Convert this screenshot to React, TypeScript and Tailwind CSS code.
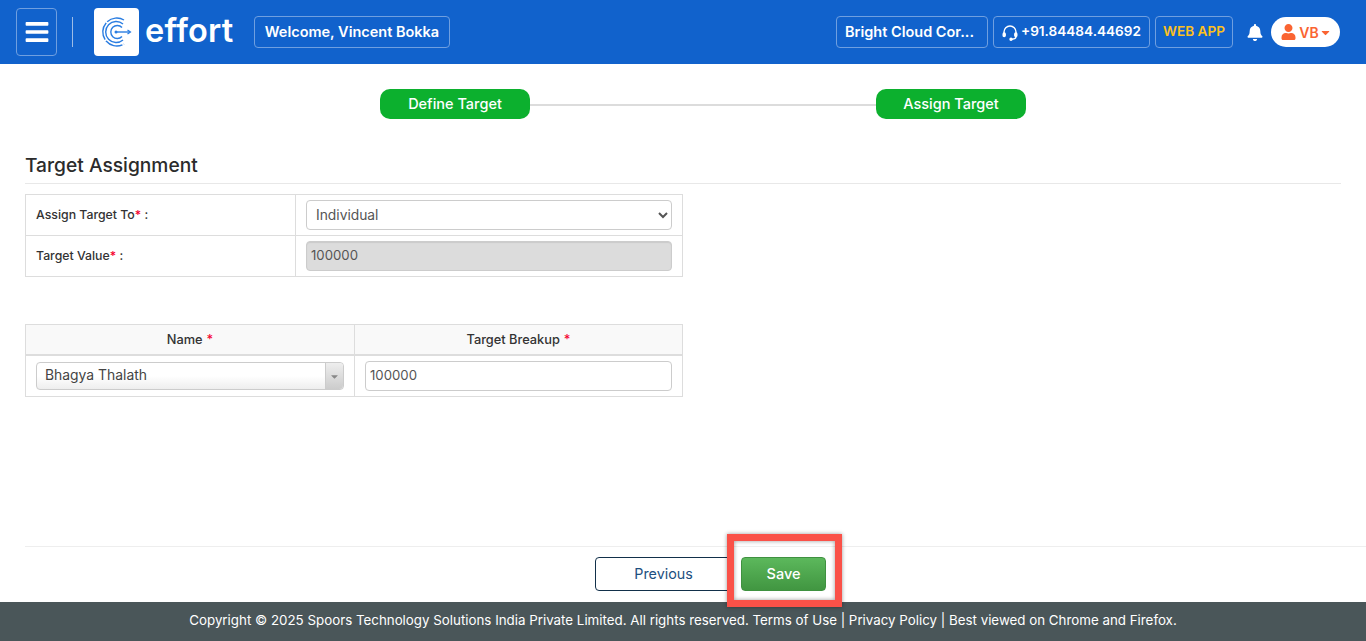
import { FaBell, FaUser, FaCaretDown, FaBars } from 'react-icons/fa';

const font = { fontFamily: 'Inter, "Noto Sans", sans-serif' };

function LogoMark() {
  return (
    <svg viewBox="0 0 44 48" className="w-[44px] h-[48px]" fill="none" stroke="#2a7de1">
      <path d="M29 12 A14 14 0 1 0 29 36" strokeWidth="1.4" strokeDasharray="18 1.5" />
      <path d="M28 16 A10.5 10.5 0 1 0 28 32" strokeWidth="1.4" />
      <path d="M27 19.5 A6.5 6.5 0 1 0 27 28.5" strokeWidth="1.4" />
      <path d="M20 24 H35" strokeWidth="1.4" />
      <path d="M32.5 22 L35.5 24 L32.5 26" strokeWidth="1.2" />
      <circle cx="21" cy="24" r="1.5" fill="#2a7de1" stroke="none" />
    </svg>
  );
}

function Star() {
  return <span className="text-[#f5002d]">*</span>;
}

function HeaderBox({ className, children }: { className: string; children: React.ReactNode }) {
  return (
    <div className={`h-[32px] pb-[1px] flex items-center border border-[#6f9fe0] rounded-[4px] font-semibold whitespace-nowrap ${className}`}>
      {children}
    </div>
  );
}

export default function App() {
  return (
    <div className="h-[641px] w-[1366px] flex flex-col bg-white overflow-hidden relative" style={font}>
      <header className="h-[64px] shrink-0 bg-[#1162cc] flex items-center text-white">
        <div className="ml-[16px] w-[41px] h-[48px] border border-[#6f9fe0] rounded-[4px] flex items-center justify-center">
          <FaBars className="w-[26px] h-[26px]" />
        </div>
        <div className="ml-[15px] w-[1px] h-[30px] bg-[#9dbce6]" />
        <div className="ml-[21px] w-[45px] h-[48px] bg-white rounded-[4px] flex items-center justify-center">
          <LogoMark />
        </div>
        <span className="ml-[6px] pb-[2px] text-[32.5px] leading-none font-semibold w-[93px] tracking-[0.2px]">effort</span>
        <HeaderBox className="ml-[16px] w-[196px] justify-center text-[14.5px]">Welcome, Vincent Bokka</HeaderBox>

        <HeaderBox className="ml-auto w-[152px] pl-[8px] text-[14.5px]">Bright Cloud Cor...</HeaderBox>
        <HeaderBox className="ml-[5px] w-[157px] pl-[8px] gap-[3px] text-[13.6px]">
          <svg viewBox="0 0 16 16" className="w-[16px] h-[16px] mt-[2px]" fill="none" stroke="white" strokeWidth="1.4">
            <path d="M2 9 V7 A6 6 0 0 1 14 7 V9" />
            <rect x="1.2" y="8" width="2" height="3.6" rx="1" fill="white" />
            <rect x="12.8" y="8" width="2" height="3.6" rx="1" fill="white" />
            <path d="M14 11.5 Q14 14 10 14.2" />
            <circle cx="9" cy="14.2" r="1" fill="white" />
          </svg>
          +91.84484.44692
        </HeaderBox>
        <HeaderBox className="ml-[5px] w-[78px] justify-center text-[13.6px] text-[#fcc01e]">WEB APP</HeaderBox>
        <FaBell className="ml-[14px] w-[16px] h-[17px]" />
        <div className="ml-[8px] mr-[26px] w-[69px] h-[30px] bg-white rounded-full flex items-center justify-center text-[#fa6432] text-[14px] font-semibold">
          <FaUser className="w-[15px] h-[16px] mr-[3px]" />
          VB
          <FaCaretDown className="w-[13px] h-[13px] -mr-[2px]" />
        </div>
      </header>

      <main className="flex-1 flex flex-col min-h-0">
        <div className="mt-[25px] ml-[380px] w-[646px] flex items-center">
          <div className="w-[150px] h-[30px] pb-[1px] rounded-[10px] bg-[#0cb02e] text-white text-[14.5px] font-medium flex items-center justify-center">Define Target</div>
          <div className="flex-1 h-[2px] mt-[2px] bg-[#dcdcdc]" />
          <div className="w-[150px] h-[30px] pb-[1px] rounded-[10px] bg-[#0cb02e] text-white text-[14.5px] font-medium flex items-center justify-center">Assign Target</div>
        </div>

        <div className="mt-[34px] mx-[25px] h-[31px] border-b border-[#e8e8e8] text-[19.2px] leading-[24px] font-medium text-[#2b2b2b]">Target Assignment</div>

        <div className="mt-[10px] ml-[25px] w-[658px] border border-[#dddddd] text-[12.3px] text-[#333] font-medium">
          <div className="h-[41px] flex border-b border-[#dddddd]">
            <div className="w-[270px] pl-[10px] flex items-center border-r border-[#dddddd]">
              <span>Assign Target To<Star /> :</span>
            </div>
            <div className="flex-1 flex items-center px-[10px]">
              <select
                defaultValue="Individual"
                className="w-full h-[30px] pl-[5px] pb-[1px] bg-white border border-[#cccccc] rounded-[4px] text-[13.8px] font-normal text-[#555]"
              >
                <option>Individual</option>
              </select>
            </div>
          </div>
          <div className="h-[40px] flex">
            <div className="w-[270px] pl-[10px] flex items-center border-r border-[#dddddd]">
              <span>Target Value<Star /> :</span>
            </div>
            <div className="flex-1 flex items-center px-[10px]">
              <input
                readOnly
                value="100000"
                className="w-full h-[30px] px-[4px] pb-[2px] bg-[#dcdcdc] border border-[#cccccc] rounded-[4px] text-[13.2px] font-normal text-[#555] shadow-[inset_0_1px_1px_rgba(0,0,0,0.08)]"
              />
            </div>
          </div>
        </div>

        <div className="mt-[47px] ml-[25px] w-[658px] border border-[#dddddd] text-[12.8px] text-[#333] font-medium">
          <div className="h-[31px] flex bg-[#f9f9f9] border-b-2 border-[#dddddd]">
            <div className="w-[329px] flex items-center justify-center gap-[4px] border-r border-[#dddddd]">Name <Star /></div>
            <div className="flex-1 flex items-center justify-center gap-[4px]">Target Breakup <Star /></div>
          </div>
          <div className="h-[40px] flex">
            <div className="w-[329px] flex items-center px-[10px] border-r border-[#dddddd]">
              <div className="w-full h-[28px] flex border border-[#cccccc] rounded-[4px] bg-gradient-to-b from-white via-white to-[#eeeeee] font-normal">
                <span className="flex-1 pl-[8px] text-[13.9px] leading-[24px] text-[#444]">Bhagya Thalath</span>
                <span className="w-[18px] border-l border-[#cccccc] bg-gradient-to-b from-[#eeeeee] to-[#cccccc] rounded-r-[4px] flex items-center justify-center">
                  <FaCaretDown className="w-[11px] h-[11px] text-[#888]" />
                </span>
              </div>
            </div>
            <div className="flex-1 flex items-center px-[10px]">
              <input
                readOnly
                value="100000"
                className="w-full h-[30px] px-[4px] pb-[2px] bg-white border border-[#cccccc] rounded-[4px] text-[13.2px] font-normal text-[#555]"
              />
            </div>
          </div>
        </div>

        <div className="mt-auto ml-[25px] h-[56px] border-t border-[#eeeeee] flex items-start">
          <div className="mt-[10px] ml-[570px] flex gap-[9px]">
            <button className="w-[137px] h-[34px] pb-[1px] border border-[#12304a] rounded-[4px] bg-white text-[14.3px] text-[#1d4f80]">Previous</button>
            <button className="w-[85px] h-[34px] pb-[1px] border border-[#3f9140] rounded-[4px] bg-gradient-to-b from-[#5cb85c] to-[#419641] text-white text-[14.5px] font-medium">Save</button>
          </div>
        </div>
      </main>

      <footer className="h-[39px] pb-[2px] shrink-0 bg-[#4a5659] text-white text-[13.34px] flex items-center justify-center">
        Copyright © 2025 Spoors Technology Solutions India Private Limited. All rights reserved. Terms of Use | Privacy Policy | Best viewed on Chrome and Firefox.
      </footer>

      <div className="absolute left-[727px] top-[534px] w-[115px] h-[73px] border-[7px] border-[#fa5148] shadow-[0_0_4px_rgba(0,0,0,0.4),inset_0_0_4px_rgba(0,0,0,0.4)]" />
    </div>
  );
}
